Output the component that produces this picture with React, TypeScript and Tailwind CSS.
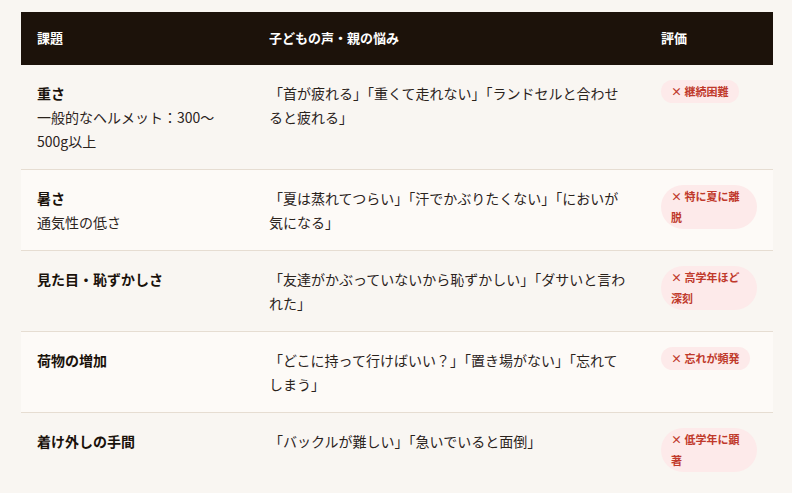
import React from 'react';

type Row = {
  title: string;
  note?: string;
  voice: string;
  verdict: string;
};

const rows: Row[] = [
  {
    title: '重さ',
    note: '一般的なヘルメット：300〜500g以上',
    voice: '「首が疲れる」「重くて走れない」「ランドセルと合わせると疲れる」',
    verdict: '継続困難',
  },
  {
    title: '暑さ',
    note: '通気性の低さ',
    voice: '「夏は蒸れてつらい」「汗でかぶりたくない」「においが気になる」',
    verdict: '特に夏に離脱',
  },
  {
    title: '見た目・恥ずかしさ',
    voice: '「友達がかぶっていないから恥ずかしい」「ダサいと言われた」',
    verdict: '高学年ほど深刻',
  },
  {
    title: '荷物の増加',
    voice: '「どこに持って行けばいい？」「置き場がない」「忘れてしまう」',
    verdict: '忘れが頻発',
  },
  {
    title: '着け外しの手間',
    voice: '「バックルが難しい」「急いでいると面倒」',
    verdict: '低学年に顕著',
  },
];

export default function App() {
  return (
    <div
      className="min-h-screen bg-[#f9f6f2] pt-3"
      style={{ fontFamily: '"Noto Sans CJK JP", "Noto Sans", sans-serif' }}
    >
      <table className="ml-[21px] w-[752px] table-fixed border-collapse text-left">
        <colgroup>
          <col className="w-[232px]" />
          <col className="w-[392px]" />
          <col className="w-[128px]" />
        </colgroup>
        <thead>
          <tr className="bg-[#1c120a] text-[13px] font-bold leading-[1.6] text-white">
            <th className="px-4 py-4 font-bold">課題</th>
            <th className="px-4 py-4 font-bold">子どもの声・親の悩み</th>
            <th className="px-4 py-4 font-bold">評価</th>
          </tr>
        </thead>
        <tbody className="text-[14px] leading-6 text-[#2b231c]">
          {rows.map((r, i) => (
            <tr
              key={r.title}
              className={`border-b border-[#e6ddd2] align-top last:border-b-0 ${i % 2 === 1 ? 'bg-[#fdfaf7]' : ''}`}
            >
              <td className="px-4 py-4">
                <strong className="block font-bold text-[#1a120b]">{r.title}</strong>
                {r.note && <span className="block">{r.note}</span>}
              </td>
              <td className="px-4 py-4">{r.voice}</td>
              <td className="px-4 py-4">
                <span className="-mt-px inline-block rounded-full bg-[#fdeaea] px-2.5 py-px align-top text-[11px] font-bold leading-[21px] text-[#c0392b]">
                  × {r.verdict}
                </span>
              </td>
            </tr>
          ))}
        </tbody>
      </table>
    </div>
  );
}
